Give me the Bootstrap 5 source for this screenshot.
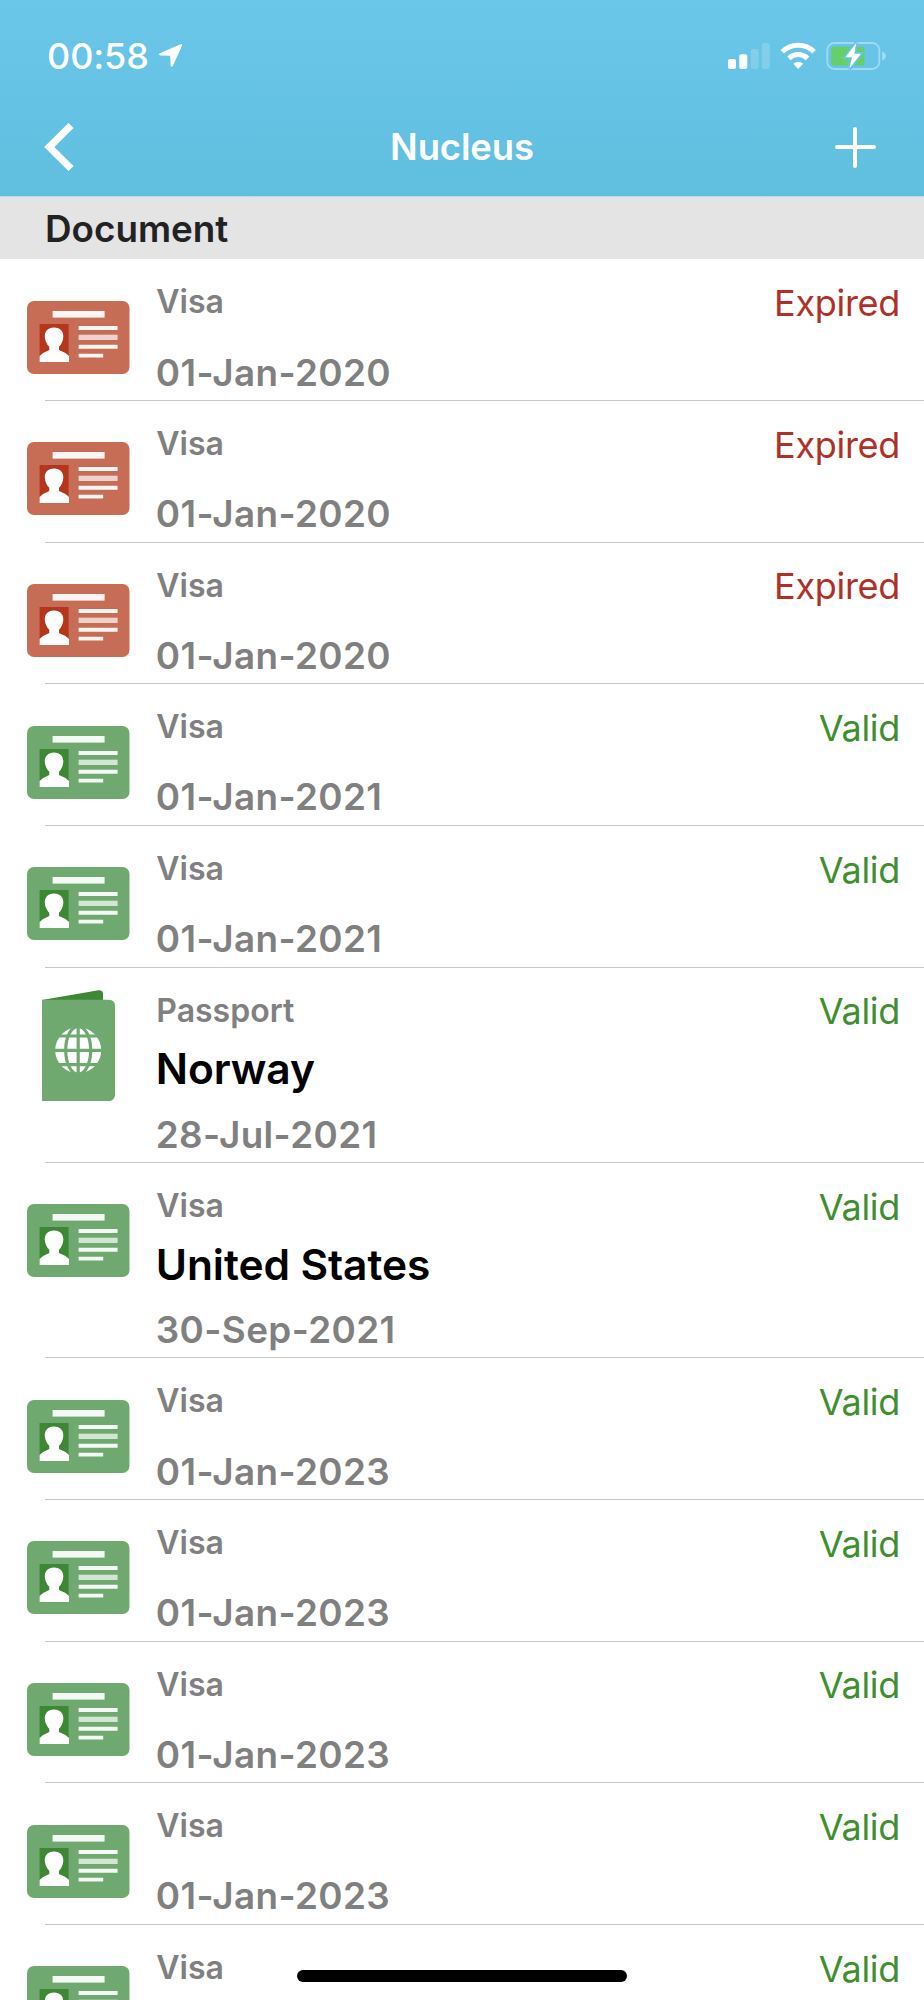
<!DOCTYPE html>
<html lang="en">
<head>
<meta charset="utf-8">
<meta name="viewport" content="width=device-width, initial-scale=1">
<title>Nucleus</title>
<link href="https://cdn.jsdelivr.net/npm/bootstrap@5.3.0/dist/css/bootstrap.min.css" rel="stylesheet">
<style>
body{font-family:Inter,"Liberation Sans",sans-serif;background:#fff;color:#000}
.screen{width:924px;height:2000px}
.topbar{height:197px;background:linear-gradient(#6ac7ea,#60bedf);border-bottom:1px solid #b5d9e5;color:#fff}
.statusbar{height:111px;padding:0 38px 0 47px}
.clock{font-size:36px;line-height:44px;font-weight:500;letter-spacing:-.1px}
.titlebar{height:72px;padding:0 47px 0 43px}
.titlebar .title{font-size:36.5px;line-height:44px;font-weight:600;letter-spacing:-.15px}
.section-head{height:61.5px;padding-left:45px;background:#e4e4e4;color:#222;font-size:36.8px;line-height:64px;font-weight:600;letter-spacing:0}
.doc{height:141.65px;padding:23.2px 24px 5.6px 22.8px;border:0;background:transparent}
.doc.tall{height:195.4px}
.doc::after{content:"";position:absolute;left:45px;right:0;bottom:-1px;height:1px;background:#c8c8ca}
.doc-icon{width:111px;height:111px;overflow:visible}
.expired{--tint:#c86d55;--deep:#b5361b;--pale:#edd3cc}
.valid{--tint:#6fa970;--deep:#3e8735;--pale:#d3e5d3}
.doc-text{margin-left:22px;color:#808080;font-weight:600}
.kind{font-size:32px;line-height:40px;padding:.8px 0 0 .5px}
.country{font-size:42.5px;line-height:50px;margin-top:13.5px;color:#000;letter-spacing:-.1px}
.date{font-size:36.8px;line-height:44px;letter-spacing:.4px}
.state{font-size:36px;line-height:41px;letter-spacing:-.3px;padding-top:1.4px}
.expired .state{color:#b03028}
.valid .state{color:#3f8f2f}
.home-bar{left:297px;bottom:18px;width:330px;height:12px;background:#000}
</style>
</head>
<body>
<svg width="0" height="0" class="position-absolute" aria-hidden="true">
  <symbol id="card-icon" viewBox="0 0 111 111">
    <rect x="4" y="19" width="102.500" height="73" rx="7" style="fill:var(--tint)"/>
    <rect x="29.6" y="29" width="52" height="6.6" fill="#fff" opacity=".93"/>
    <rect x="16.6" y="42" width="29" height="37.5" style="fill:var(--deep)"/>
    <path d="M31 45.6c6 0 9.6 3.8 9.3 9.4-.3 4.200-2 7.500-4.300 9.800v3.200l6.500 3 3.500 3v6H16.600v-6l3.500-3 6.200-3v-3.200c-2.300-2.300-4.200-5.600-4.500-9.800-.3-5.600 3.200-9.400 9.200-9.400z" fill="#fff"/>
    <path d="M55.600 44h39v4h-39zM55.600 62.700h39v4h-39zM55.600 71.800h24.600v3.800H55.600z" fill="#fff" opacity=".93"/>
    <rect x="55.600" y="52.700" width="39" height="5.300" style="fill:var(--pale)"/>
  </symbol>
  <symbol id="passport-icon" viewBox="0 0 111 111">
    <path d="M19 10L75.500 0.300Q80 0 80 4V12H19z" style="fill:var(--deep)"/>
    <path d="M19 9.800H86Q92 10 92 16V105Q91.500 110 87 111H19z" style="fill:var(--tint)"/>
    <circle cx="55.200" cy="60.300" r="23" fill="#fff"/>
    <g fill="none" stroke-width="3.200" style="stroke:var(--tint)">
      <path d="M55.200 36v48M31.600 60.300h47M34.600 46h41M34.600 74.600h41"/>
      <ellipse cx="55.200" cy="60.300" rx="12.500" ry="24"/>
    </g>
  </symbol>
</svg>

<div class="screen position-relative overflow-hidden">
  <header class="topbar">
    <div class="statusbar d-flex align-items-center">
      <span class="clock">00:58</span>
      <svg class="ms-2" width="26" height="26" viewBox="0 0 26 26"><path d="M23.500 1.200Q25.800.500 25 2.800L15.800 23Q14.300 25.200 13.600 22.600L13.200 12.800 3.600 12.400Q.600 11.600 3 10.200z" fill="#fff"/></svg>
      <svg class="ms-auto" width="158" height="28" viewBox="0 0 158 28">
        <g fill="#fff">
          <rect y="17" width="8" height="10" rx="2"/><rect x="11.300" y="12.300" width="8" height="14.700" rx="2"/>
          <rect x="22.700" y="7" width="8" height="20" rx="2" opacity=".18"/><rect x="33.800" y="1" width="8" height="26" rx="2" opacity=".18"/>
        </g>
        <g fill="none" stroke="#fff" stroke-width="5">
          <path d="M54.300 9.700A22.700 22.700 0 0 1 86.100 9.700"/><path d="M60.900 16.400A13.300 13.300 0 0 1 79.500 16.400"/>
        </g>
        <path d="M65.300 21.700Q70.200 17.900 75.100 21.700L70.200 26.900z" fill="#fff"/>
        <rect x="99.300" y="1" width="52" height="26" rx="7" fill="none" stroke="#9fdaf0" stroke-width="1.800"/>
        <path d="M154.200 9.500q3.600 1.300 3.600 4.500t-3.600 4.500z" fill="#a5dcf1"/>
        <rect x="103.200" y="4.800" width="33.300" height="18.600" rx="2.500" fill="#66cf67"/>
        <path d="M128.500.6L117.500 15.300H124L121.300 26.800 133 11.800H126.300z" fill="#fff" stroke="#67c4e6" stroke-width="3.500" paint-order="stroke"/>
      </svg>
    </div>
    <div class="titlebar d-flex align-items-center justify-content-between">
      <svg width="48" height="50" viewBox="0 0 48 50"><path d="M28 3.500L6.300 25 28 46.500" fill="none" stroke="#fff" stroke-width="7.200"/></svg>
      <span class="title">Nucleus</span>
      <svg width="44" height="44" viewBox="0 0 44 44"><path d="M22 4v37M4 22h37" stroke="#fff" stroke-width="4" stroke-linecap="round"/></svg>
    </div>
  </header>
  <div class="section-head">Document</div>
  <div class="list-group list-group-flush">
    <div class="list-group-item doc expired d-flex align-items-start"><svg class="doc-icon flex-shrink-0"><use href="#card-icon"/></svg><div class="doc-text d-flex flex-column h-100"><div class="kind">Visa</div><div class="date mt-auto">01-Jan-2020</div></div><div class="state ms-auto">Expired</div></div>
    <div class="list-group-item doc expired d-flex align-items-start"><svg class="doc-icon flex-shrink-0"><use href="#card-icon"/></svg><div class="doc-text d-flex flex-column h-100"><div class="kind">Visa</div><div class="date mt-auto">01-Jan-2020</div></div><div class="state ms-auto">Expired</div></div>
    <div class="list-group-item doc expired d-flex align-items-start"><svg class="doc-icon flex-shrink-0"><use href="#card-icon"/></svg><div class="doc-text d-flex flex-column h-100"><div class="kind">Visa</div><div class="date mt-auto">01-Jan-2020</div></div><div class="state ms-auto">Expired</div></div>
    <div class="list-group-item doc valid d-flex align-items-start"><svg class="doc-icon flex-shrink-0"><use href="#card-icon"/></svg><div class="doc-text d-flex flex-column h-100"><div class="kind">Visa</div><div class="date mt-auto">01-Jan-2021</div></div><div class="state ms-auto">Valid</div></div>
    <div class="list-group-item doc valid d-flex align-items-start"><svg class="doc-icon flex-shrink-0"><use href="#card-icon"/></svg><div class="doc-text d-flex flex-column h-100"><div class="kind">Visa</div><div class="date mt-auto">01-Jan-2021</div></div><div class="state ms-auto">Valid</div></div>
    <div class="list-group-item doc tall valid d-flex align-items-start"><svg class="doc-icon flex-shrink-0"><use href="#passport-icon"/></svg><div class="doc-text d-flex flex-column h-100"><div class="kind">Passport</div><div class="country">Norway</div><div class="date mt-auto">28-Jul-2021</div></div><div class="state ms-auto">Valid</div></div>
    <div class="list-group-item doc tall valid d-flex align-items-start"><svg class="doc-icon flex-shrink-0"><use href="#card-icon"/></svg><div class="doc-text d-flex flex-column h-100"><div class="kind">Visa</div><div class="country">United States</div><div class="date mt-auto">30-Sep-2021</div></div><div class="state ms-auto">Valid</div></div>
    <div class="list-group-item doc valid d-flex align-items-start"><svg class="doc-icon flex-shrink-0"><use href="#card-icon"/></svg><div class="doc-text d-flex flex-column h-100"><div class="kind">Visa</div><div class="date mt-auto">01-Jan-2023</div></div><div class="state ms-auto">Valid</div></div>
    <div class="list-group-item doc valid d-flex align-items-start"><svg class="doc-icon flex-shrink-0"><use href="#card-icon"/></svg><div class="doc-text d-flex flex-column h-100"><div class="kind">Visa</div><div class="date mt-auto">01-Jan-2023</div></div><div class="state ms-auto">Valid</div></div>
    <div class="list-group-item doc valid d-flex align-items-start"><svg class="doc-icon flex-shrink-0"><use href="#card-icon"/></svg><div class="doc-text d-flex flex-column h-100"><div class="kind">Visa</div><div class="date mt-auto">01-Jan-2023</div></div><div class="state ms-auto">Valid</div></div>
    <div class="list-group-item doc valid d-flex align-items-start"><svg class="doc-icon flex-shrink-0"><use href="#card-icon"/></svg><div class="doc-text d-flex flex-column h-100"><div class="kind">Visa</div><div class="date mt-auto">01-Jan-2023</div></div><div class="state ms-auto">Valid</div></div>
    <div class="list-group-item doc valid d-flex align-items-start"><svg class="doc-icon flex-shrink-0"><use href="#card-icon"/></svg><div class="doc-text d-flex flex-column h-100"><div class="kind">Visa</div></div><div class="state ms-auto">Valid</div></div>
  </div>
  <div class="home-bar position-absolute rounded-pill"></div>
</div>
<script src="https://cdn.jsdelivr.net/npm/bootstrap@5.3.0/dist/js/bootstrap.bundle.min.js"></script>
</body>
</html>
